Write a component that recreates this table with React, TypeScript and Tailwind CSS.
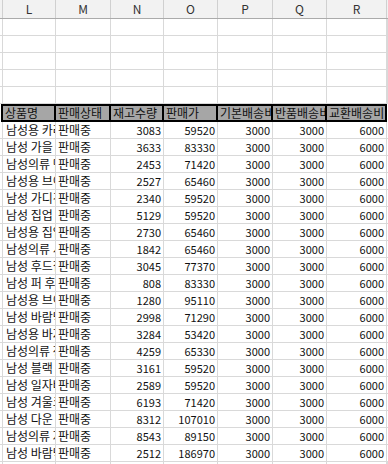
const font = { fontFamily: '"Noto Sans CJK KR", "Noto Sans", sans-serif' };

const gridCols = "grid grid-cols-[3px_53px_55px_53px_54px_55px_54px_60px_1fr]";

const letters = ["L", "M", "N", "O", "P", "Q", "R"];
const heads = ["상품명", "판매상태", "재고수량", "판매가", "기본배송비", "반품배송비", "교환배송비"];

const names = [
  "남성용 카라티셔츠",
  "남성 가을 니트",
  "남성의류 맨투맨",
  "남성용 브이넥 니트",
  "남성 가디건",
  "남성 집업 후드",
  "남성용 집업 자켓",
  "남성의류 셔츠",
  "남성 후드집업",
  "남성 퍼 후리스",
  "남성용 브이넥",
  "남성 바람막이",
  "남성용 바지",
  "남성의류 청바지",
  "남성 블랙 슬랙스",
  "남성 일자바지",
  "남성 겨울코트",
  "남성 다운 패딩",
  "남성의류 자켓",
  "남성 바람막이",
];

const stock = [3083, 3633, 2453, 2527, 2340, 5129, 2730, 1842, 3045, 808, 1280, 2998, 3284, 4259, 3161, 2589, 6193, 8312, 8543, 2512];
const price = [59520, 83330, 71420, 65460, 59520, 59520, 65460, 65460, 77370, 83330, 95110, 71290, 53420, 65330, 59520, 59520, 71420, 107010, 89150, 186970];

function EmptyRow() {
  return (
    <div className={`${gridCols} h-[17px]`}>
      {Array.from({ length: 9 }).map((_, i) => (
        <div key={i} className="border-r border-b border-[#d9d9d9]" />
      ))}
    </div>
  );
}

export default function App() {
  return (
    <div className="h-[464px] w-[388px] overflow-hidden bg-white text-[11px] text-[#111]" style={font}>
      <div className={`${gridCols} h-[19px] bg-[#f2f2f2] border-b border-[#ababab] text-[12px] text-[#333]`}>
        <div className="border-r border-[#d0d0d0]" />
        {letters.map((l) => (
          <div key={l} className="flex items-center justify-center border-r border-[#d0d0d0] leading-none">
            {l}
          </div>
        ))}
        <div />
      </div>

      {Array.from({ length: 5 }).map((_, i) => (
        <EmptyRow key={i} />
      ))}

      <div className={`${gridCols} h-[18px]`}>
        <div className="border-r-2 border-black" />
        {heads.map((h) => (
          <div
            key={h}
            className="overflow-hidden whitespace-nowrap border-y-2 border-r-2 border-black bg-[#a6a6a6] pl-[2px] text-[12px] leading-[14px]"
          >
            {h}
          </div>
        ))}
        <div />
      </div>

      {names.map((n, i) => (
        <div key={i} className={`${gridCols} h-[17px] leading-[16px]`}>
          <div className="border-r border-b border-[#d9d9d9]" />
          <div className="overflow-hidden whitespace-nowrap border-r border-b border-[#d9d9d9] pl-[3px] text-[12px]">{n}</div>
          <div className="overflow-hidden whitespace-nowrap border-r border-b border-[#d9d9d9] pl-[2px] text-[12px]">판매중</div>
          <div className="border-r border-b border-[#d9d9d9] pr-[2px] text-right">{stock[i]}</div>
          <div className="border-r border-b border-[#d9d9d9] pr-[2px] text-right">{price[i]}</div>
          <div className="border-r border-b border-[#d9d9d9] pr-[2px] text-right">3000</div>
          <div className="border-r border-b border-[#d9d9d9] pr-[2px] text-right">3000</div>
          <div className="border-r border-b border-[#d9d9d9] pr-[2px] text-right">6000</div>
          <div className="border-b border-[#d9d9d9]" />
        </div>
      ))}
      <EmptyRow />
    </div>
  );
}
